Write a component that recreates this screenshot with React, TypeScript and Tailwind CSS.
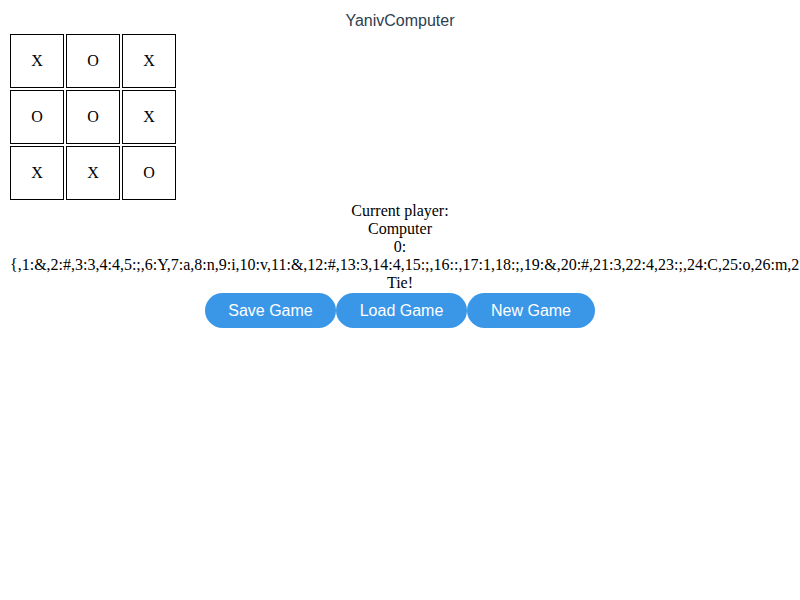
import React from "react";

const board = ["X", "O", "X", "O", "O", "X", "X", "X", "O"];

const saved =
  "{,1:&,2:#,3:3,4:4,5:;,6:Y,7:a,8:n,9:i,10:v,11:&,12:#,13:3,14:4,15:;,16::,17:1,18:;,19:&,20:#,21:3,22:4,23:;,24:C,25:o,26:m,27:p,28:u,29:t,30:e,31:r,32:&,33:#,34:3,35:4,36:;,37::,38:2,39:}";

function Cell({ value }: { value: string }) {
  return (
    <div className="w-[54px] h-[54px] border border-black flex items-center justify-center text-[16px] text-black font-['Liberation_Serif',serif]">
      {value}
    </div>
  );
}

export default function App() {
  return (
    <div className="min-h-[600px] bg-white text-center overflow-hidden">
      <div className="pt-[12px] text-[16px] leading-[18px] text-[#2c3e50] font-['Liberation_Sans',Arial,sans-serif]">
        YanivComputer
      </div>
      <div className="ml-[10px] mt-[4px] grid grid-cols-[54px_54px_54px] gap-[2px] w-fit">
        {board.map((v, i) => (
          <Cell key={i} value={v} />
        ))}
      </div>
      <div className="px-[10px] pt-[2px] text-[16px] leading-[18px] text-black font-['Liberation_Serif',serif]">
        <div>Current player:</div>
        <div>Computer</div>
        <div>0:</div>
        <div className="whitespace-nowrap text-left">{saved}</div>
        <div>Tie!</div>
      </div>
      <div className="flex justify-center mt-[1px] font-['Liberation_Sans',Arial,sans-serif]">
        <button className="h-[35px] w-[131px] rounded-full bg-[#3a97e8] text-white text-[16px]">
          Save Game
        </button>
        <button className="h-[35px] w-[131px] rounded-full bg-[#3a97e8] text-white text-[16px]">
          Load Game
        </button>
        <button className="h-[35px] w-[128px] rounded-full bg-[#3a97e8] text-white text-[16px]">
          New Game
        </button>
      </div>
    </div>
  );
}
